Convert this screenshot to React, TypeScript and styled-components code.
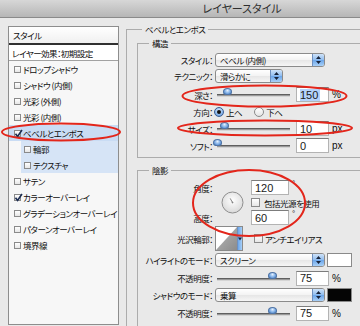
import React from 'react'
import styled, {createGlobalStyle} from 'styled-components'

const JP = `'Noto Sans CJK JP', 'Noto Sans', sans-serif`
const NUM = `'Liberation Sans', 'Noto Sans', sans-serif`

const GlobalStyle = createGlobalStyle`
  html, body {
    margin: 0;
    padding: 0;
    background: #e8e8e8;
  }
  body {
    font-family: ${JP};
    font-feature-settings: 'palt';
    letter-spacing: -0.5px;
    color: #0e0e0e;
  }
  * {
    box-sizing: border-box;
  }
`

const Window = styled.div`
  position: relative;
  width: 360px;
  height: 326px;
  overflow: hidden;
  background: #e9e9e9;
`

const TitleBar = styled.div`
  height: 18px;
  display: flex;
  align-items: center;
  justify-content: center;
  padding-left: 124px;
  background: linear-gradient(#d7d7d7, #b6b6b6);
  border-bottom: 1px solid #8a8a8a;
  font-size: 11px;
  letter-spacing: 0;
  line-height: 1;
  color: #2e2e2e;
`

const Body = styled.div`
  display: flex;
  gap: 7px;
  height: 308px;
  padding: 5px 0 0 8px;
`

/* left: effect list */

const StylePanel = styled.div`
  width: 111px;
  height: 299px;
  margin-top: 3px;
  flex-shrink: 0;
  display: flex;
  flex-direction: column;
  border: 1px solid #8d8d8d;
  background: #f7f7f7;
  font-size: 8.5px;
`

const PanelHeader = styled.div`
  height: 18px;
  display: flex;
  align-items: center;
  padding-left: 4px;
  background: linear-gradient(#ffffff, #f0f0f0);
  border-bottom: 2px solid #303030;
`

const PresetRow = styled.div`
  height: 16px;
  display: flex;
  align-items: center;
  padding-left: 3px;
  background: #fff;
  border-bottom: 1px solid #a2a2a2;
`

const EffectRow = styled.div<{$indent?: boolean; $hl?: 'main' | 'sub'}>`
  height: 16px;
  display: flex;
  align-items: center;
  gap: 2px;
  padding-left: ${p => (p.$indent ? 15 : 5)}px;
  white-space: nowrap;
  background: ${p =>
    p.$hl === 'main'
      ? '#c9dcf4'
      : p.$hl === 'sub'
        ? 'linear-gradient(to right, transparent 12px, #d6e4f6 12px)'
        : 'transparent'};
`

const Box = styled.span<{$size: number}>`
  position: relative;
  flex-shrink: 0;
  width: ${p => p.$size}px;
  height: ${p => p.$size}px;
  border: 1px solid #8a8a8a;
  background: linear-gradient(#ffffff, #e6e6e6);
`

const CheckMark = styled.svg`
  position: absolute;
  left: -1px;
  top: -2px;
`

const Checkbox = ({checked, size = 7}: {checked?: boolean; size?: number}) => (
  <Box $size={size}>
    {checked && (
      <CheckMark width="9" height="9" viewBox="0 0 9 9">
        <path d="M1.5 4.8 L3.6 7.4 L8 1" fill="none" stroke="#1b2c52" strokeWidth="1.6" />
      </CheckMark>
    )}
  </Box>
)

/* right: settings */

const Settings = styled.div`
  width: 260px;
  flex-shrink: 0;
`

const Group = styled.fieldset`
  margin: 0;
  padding: 0;
  min-width: 0;
  border: 1px solid #acacac;
`

const Legend = styled.legend<{$offset: number}>`
  margin-left: ${p => p.$offset}px;
  padding: 0 3px;
  height: 12px;
  font-size: 8.5px;
  line-height: 12px;
`

const GroupBody = styled.div<{$pad: string}>`
  padding: ${p => p.$pad};
`

const Row = styled.div<{$h: number; $mt?: number}>`
  height: ${p => p.$h}px;
  margin-top: ${p => p.$mt ?? 0}px;
  display: flex;
  align-items: center;
  font-size: 8.5px;
  white-space: nowrap;
`

const Label = styled.span`
  width: 76px;
  flex-shrink: 0;
  padding-right: 1px;
  text-align: right;
  font-size: 8.5px;
`

const SelectBox = styled.div<{$w: number}>`
  width: ${p => p.$w}px;
  height: 14px;
  margin-left: 1px;
  display: flex;
  align-items: center;
  border: 1px solid #8b8b8b;
  border-radius: 3px;
  background: linear-gradient(#ffffff, #f3f3f3 50%, #e6e6e6 51%, #f6f6f6);
  overflow: hidden;
  font-size: 8.5px;
`

const SelectText = styled.span`
  flex: 1;
  padding-left: 4px;
`

const Stepper = styled.span`
  width: 12px;
  height: 100%;
  display: flex;
  align-items: center;
  justify-content: center;
  border-left: 1px solid #6d8fbf;
  background: linear-gradient(#cfe3f9, #8ebcef 50%, #6aa5ea 51%, #a9d0f7);
`

const Select = ({w, children}: {w: number; children: React.ReactNode}) => (
  <SelectBox $w={w}>
    <SelectText>{children}</SelectText>
    <Stepper>
      <svg width="5" height="8" viewBox="0 0 5 8">
        <path d="M2.5 0 L5 3 L0 3 Z M0 5 L5 5 L2.5 8 Z" fill="#17233a" />
      </svg>
    </Stepper>
  </SelectBox>
)

const TrackWrap = styled.div`
  width: 73px;
  margin-left: 3px;
  padding-top: 2px;
`

const Track = styled.div`
  position: relative;
  height: 3px;
  border-top: 1px solid #5f5f5f;
  border-bottom: 1px solid #d4d4d4;
  background: #999;
`

const Thumb = styled.span`
  position: absolute;
  top: -7px;
  width: 9px;
  height: 7px;
  margin-left: -4px;
  border: 1px solid #4f74a6;
  border-radius: 50% 50% 40% 40%;
  background: radial-gradient(circle at 50% 30%, #e3f0ff, #7eaee6 55%, #4677b8);
`

const Slider = ({pct}: {pct: number}) => (
  <TrackWrap>
    <Track>
      <Thumb style={{left: `${pct}%`}} />
    </Track>
  </TrackWrap>
)

const ValueBox = styled.div<{$w: number; $ml: number}>`
  width: ${p => p.$w}px;
  height: 15px;
  margin-left: ${p => p.$ml}px;
  display: flex;
  align-items: center;
  padding-left: 3px;
  background: #fff;
  border: 1px solid #b3b3b3;
  border-top-color: #7c7c7c;
  font-family: ${NUM};
  font-size: 11px;
  letter-spacing: 0;
  color: #1a1a1a;
`

const Highlight = styled.span`
  background: #b4d3fb;
  padding-right: 2px;
`

const Unit = styled.span`
  margin-left: 3px;
  font-family: ${NUM};
  font-size: 10px;
  letter-spacing: 0;
`

const Radio = styled.span<{$on?: boolean}>`
  width: 10px;
  height: 10px;
  flex-shrink: 0;
  display: flex;
  align-items: center;
  justify-content: center;
  border-radius: 50%;
  border: 1px solid ${p => (p.$on ? '#3d5f91' : '#8a8a8a')};
  background: ${p =>
    p.$on
      ? 'radial-gradient(circle at 50% 35%, #e8f2ff, #86b4ea 60%, #4f82c6)'
      : 'linear-gradient(#ffffff, #e4e4e4)'};

  &::after {
    content: '';
    display: ${p => (p.$on ? 'block' : 'none')};
    width: 4px;
    height: 4px;
    border-radius: 50%;
    background: #111;
  }
`

const Option = styled.span<{$ml: number}>`
  display: flex;
  align-items: center;
  gap: 2px;
  margin-left: ${p => p.$ml}px;
`

const AngleGrid = styled.div`
  display: grid;
  grid-template-columns: 76px 23px 1fr;
  grid-template-rows: 15px 15px 15px;
  column-gap: 7px;
  align-items: center;
  font-size: 8.5px;
`

const GridLabel = styled(Label)<{$row: number}>`
  grid-column: 1;
  grid-row: ${p => p.$row};
`

const Dial = styled.svg`
  grid-column: 2;
  grid-row: 1 / 4;
  align-self: center;
`

const InlineField = styled.div<{$row: number}>`
  grid-column: 3;
  grid-row: ${p => p.$row};
  display: flex;
  align-items: center;
  gap: 4px;
  white-space: nowrap;
`

const Degree = styled.span`
  font-family: ${NUM};
  font-size: 8px;
  letter-spacing: 0;
  align-self: flex-start;
  line-height: 8px;
  margin-left: -1px;
`

const ContourPicker = styled.div`
  display: flex;
  margin-left: 1px;
  height: 25px;
  border: 1px solid #8a8a8a;
  background: #fff;
`

const ContourArrow = styled.span`
  width: 5px;
  display: flex;
  align-items: center;
  justify-content: center;
  background: linear-gradient(to right, #6aa5ea, #a9d0f7);
  border-left: 1px solid #6d8fbf;
`

const Swatch = styled.span<{$color: string}>`
  width: 25px;
  height: 14px;
  margin-left: 2px;
  background: ${p => p.$color};
  border: 1px solid #8a8a8a;
`

const Marks = styled.svg`
  position: absolute;
  left: 0;
  top: 0;
  pointer-events: none;
`

const EFFECTS: {name: string; checked?: boolean; indent?: boolean; hl?: 'main' | 'sub'}[] = [
  {name: 'ドロップシャドウ'},
  {name: 'シャドウ (内側)'},
  {name: '光彩 (外側)'},
  {name: '光彩 (内側)'},
  {name: 'ベベルとエンボス', checked: true, hl: 'main'},
  {name: '輪郭', indent: true, hl: 'sub'},
  {name: 'テクスチャ', indent: true, hl: 'sub'},
  {name: 'サテン'},
  {name: 'カラーオーバーレイ', checked: true},
  {name: 'グラデーションオーバーレイ'},
  {name: 'パターンオーバーレイ'},
  {name: '境界線'},
]

const SliderRow = ({label, pct, value, unit, selected, h = 17, mt}: {
  label: string
  pct: number
  value: string
  unit: string
  selected?: boolean
  h?: number
  mt?: number
}) => (
  <Row $h={h} $mt={mt}>
    <Label>{label}</Label>
    <Slider pct={pct} />
    <ValueBox $w={33} $ml={6}>{selected ? <Highlight>{value}</Highlight> : value}</ValueBox>
    <Unit>{unit}</Unit>
  </Row>
)

const App = () => {
  return (
    <Window>
      <GlobalStyle />
      <TitleBar>レイヤースタイル</TitleBar>
      <Body>
        <StylePanel>
          <PanelHeader>スタイル</PanelHeader>
          <PresetRow>レイヤー効果：初期設定</PresetRow>
          {EFFECTS.map(e => (
            <EffectRow key={e.name} $indent={e.indent} $hl={e.hl}>
              <Checkbox checked={e.checked} />
              {e.name}
            </EffectRow>
          ))}
        </StylePanel>

        <Settings>
          <Group>
            <Legend $offset={15}>ベベルとエンボス</Legend>
            <GroupBody $pad="2px 0 0 10px">
              <Group>
                <Legend $offset={11}>構造</Legend>
                <GroupBody $pad="3px 0 3px 0">
                  <Row $h={16}>
                    <Label>スタイル：</Label>
                    <Select w={110}>ベベル (内側)</Select>
                  </Row>
                  <Row $h={16}>
                    <Label>テクニック：</Label>
                    <Select w={68}>滑らかに</Select>
                  </Row>
                  <SliderRow label="深さ：" pct={14} value="150" unit="%" selected mt={2} />
                  <Row $h={17}>
                    <Label>方向：</Label>
                    <Option $ml={0}>
                      <Radio $on />
                      上へ
                    </Option>
                    <Option $ml={12}>
                      <Radio />
                      下へ
                    </Option>
                  </Row>
                  <SliderRow label="サイズ：" pct={10} value="10" unit="px" />
                  <SliderRow label="ソフト：" pct={0} value="0" unit="px" />
                </GroupBody>
              </Group>

              <Group style={{marginTop: 6}}>
                <Legend $offset={11}>陰影</Legend>
                <GroupBody $pad="4px 0 10px 0">
                  <AngleGrid>
                    <GridLabel $row={1}>角度：</GridLabel>
                    <GridLabel $row={3}>高度：</GridLabel>
                    <Dial width="23" height="23" viewBox="0 0 23 23">
                      <defs>
                        <radialGradient id="dialFill" cx="50%" cy="40%" r="60%">
                          <stop offset="0" stopColor="#ffffff" />
                          <stop offset="1" stopColor="#d9d9d9" />
                        </radialGradient>
                      </defs>
                      <circle cx="11.5" cy="11.5" r="10.5" fill="url(#dialFill)" stroke="#8f8f8f" />
                      <line x1="11.5" y1="11.5" x2="9.2" y2="7.4" stroke="#666" strokeWidth="0.8" />
                      <line x1="10.5" y1="11.5" x2="12.5" y2="11.5" stroke="#777" strokeWidth="0.6" />
                      <line x1="11.5" y1="10.5" x2="11.5" y2="12.5" stroke="#777" strokeWidth="0.6" />
                    </Dial>
                    <InlineField $row={1}>
                      <ValueBox $w={38} $ml={0}>120</ValueBox>
                      <Degree>°</Degree>
                    </InlineField>
                    <InlineField $row={2}>
                      <Checkbox size={9} />
                      包括光源を使用
                    </InlineField>
                    <InlineField $row={3}>
                      <ValueBox $w={38} $ml={0}>60</ValueBox>
                      <Degree>°</Degree>
                    </InlineField>
                  </AngleGrid>

                  <Row $h={25} $mt={1}>
                    <Label>光沢輪郭：</Label>
                    <ContourPicker>
                      <svg width="21" height="23" viewBox="0 0 21 23">
                        <defs>
                          <linearGradient id="contourFill" x1="0" y1="0" x2="1" y2="1">
                            <stop offset="0" stopColor="#b9b9b9" />
                            <stop offset="1" stopColor="#8c8c8c" />
                          </linearGradient>
                        </defs>
                        <polygon points="0,23 21,0 21,23" fill="url(#contourFill)" />
                      </svg>
                      <ContourArrow>
                        <svg width="4" height="4" viewBox="0 0 4 4">
                          <path d="M0 0.5 L4 0.5 L2 3.5 Z" fill="#17233a" />
                        </svg>
                      </ContourArrow>
                    </ContourPicker>
                    <Option $ml={11}>
                      <Checkbox size={9} />
                      アンチエイリアス
                    </Option>
                  </Row>

                  <Row $h={16} $mt={1}>
                    <Label>ハイライトのモード：</Label>
                    <Select w={110}>スクリーン</Select>
                    <Swatch $color="#ffffff" />
                  </Row>
                  <SliderRow label="不透明度：" pct={75} value="75" unit="%" h={18} mt={1} />
                  <Row $h={16}>
                    <Label>シャドウのモード：</Label>
                    <Select w={110}>乗算</Select>
                    <Swatch $color="#050505" />
                  </Row>
                  <SliderRow label="不透明度：" pct={75} value="75" unit="%" h={18} mt={1} />
                </GroupBody>
              </Group>
            </GroupBody>
          </Group>
        </Settings>
      </Body>

      <Marks width="360" height="326" viewBox="0 0 360 326">
        <g fill="none" stroke="#e3261b" strokeWidth="2">
          <ellipse cx="61" cy="132" rx="59" ry="8.5" />
          <ellipse cx="264.5" cy="96" rx="82" ry="10.5" />
          <ellipse cx="265" cy="128" rx="87" ry="7.5" />
          <ellipse cx="249" cy="203" rx="56" ry="33" />
        </g>
      </Marks>
    </Window>
  )
}

export default App
